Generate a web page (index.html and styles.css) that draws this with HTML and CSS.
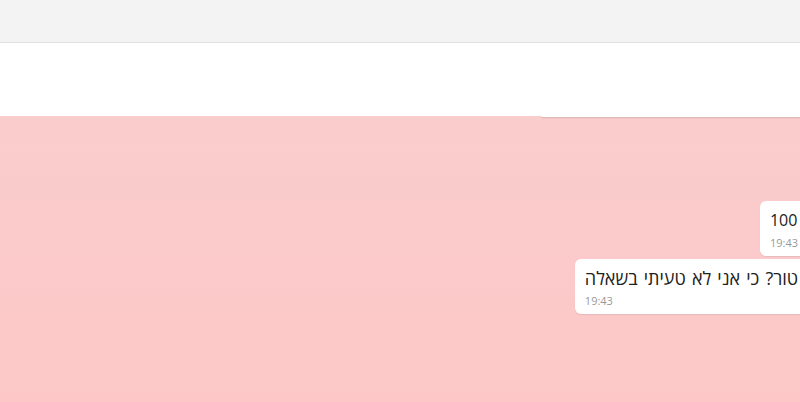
FILE: index.html
```html
<!DOCTYPE html>
<html lang="he">
<head>
<meta charset="utf-8">
<title>Chat</title>
<link rel="stylesheet" href="styles.css">
</head>
<body>
<div class="app">
  <div class="topbar"></div>
  <div class="header">
    <div class="header-left"></div>
    <div class="header-right"></div>
  </div>
  <div class="chat">
    <div class="messages">
      <div class="bubble">
        <div class="text">100</div>
        <div class="time">19:43</div>
      </div>
      <div class="bubble">
        <div class="text text-rtl" dir="rtl">טור? כי אני לא טעיתי בשאלה</div>
        <div class="time">19:43</div>
      </div>
    </div>
  </div>
</div>
</body>
</html>
```
FILE: styles.css
```css
* { box-sizing: border-box; }
html, body {
  margin: 0;
  padding: 0;
  width: 800px;
  height: 402px;
  overflow: hidden;
  font-family: "Open Sans", "Noto Sans", "DejaVu Sans", sans-serif;
}
.app {
  display: flex;
  flex-direction: column;
  height: 402px;
  width: 840px;
}
.topbar {
  height: 43px;
  background: #f3f3f3;
  border-bottom: 1px solid #e1e1e1;
  flex: none;
}
.header {
  height: 73px;
  display: flex;
  background: #fff;
  flex: none;
  position: relative;
  z-index: 1;
}
.header-left { width: 540px; }
.header-right {
  flex: 1;
  height: 74px;
  background: #fff;
  box-shadow: 0 2px 2px -1px rgba(0, 0, 0, 0.14);
  border-radius: 0 0 0 3px;
}
.chat {
  flex: 1;
  background: linear-gradient(#facdcd, #fdc7c7);
  padding-top: 85px;
}
.messages {
  display: flex;
  flex-direction: column;
  align-items: flex-end;
  gap: 3px;
  padding-right: 32px;
}
.bubble {
  background: #fff;
  border-radius: 6px;
  box-shadow: 0 1px 1px rgba(0, 0, 0, 0.08);
  padding: 8px 10px 6px 10px;
}
.text {
  font-size: 16px;
  line-height: 22px;
  color: #222;
}
.text-rtl {
  font-size: 18px;
  word-spacing: 1.5px;
}
.time {
  font-size: 11px;
  line-height: 15px;
  margin-top: 4px;
  color: #999;
}
```
